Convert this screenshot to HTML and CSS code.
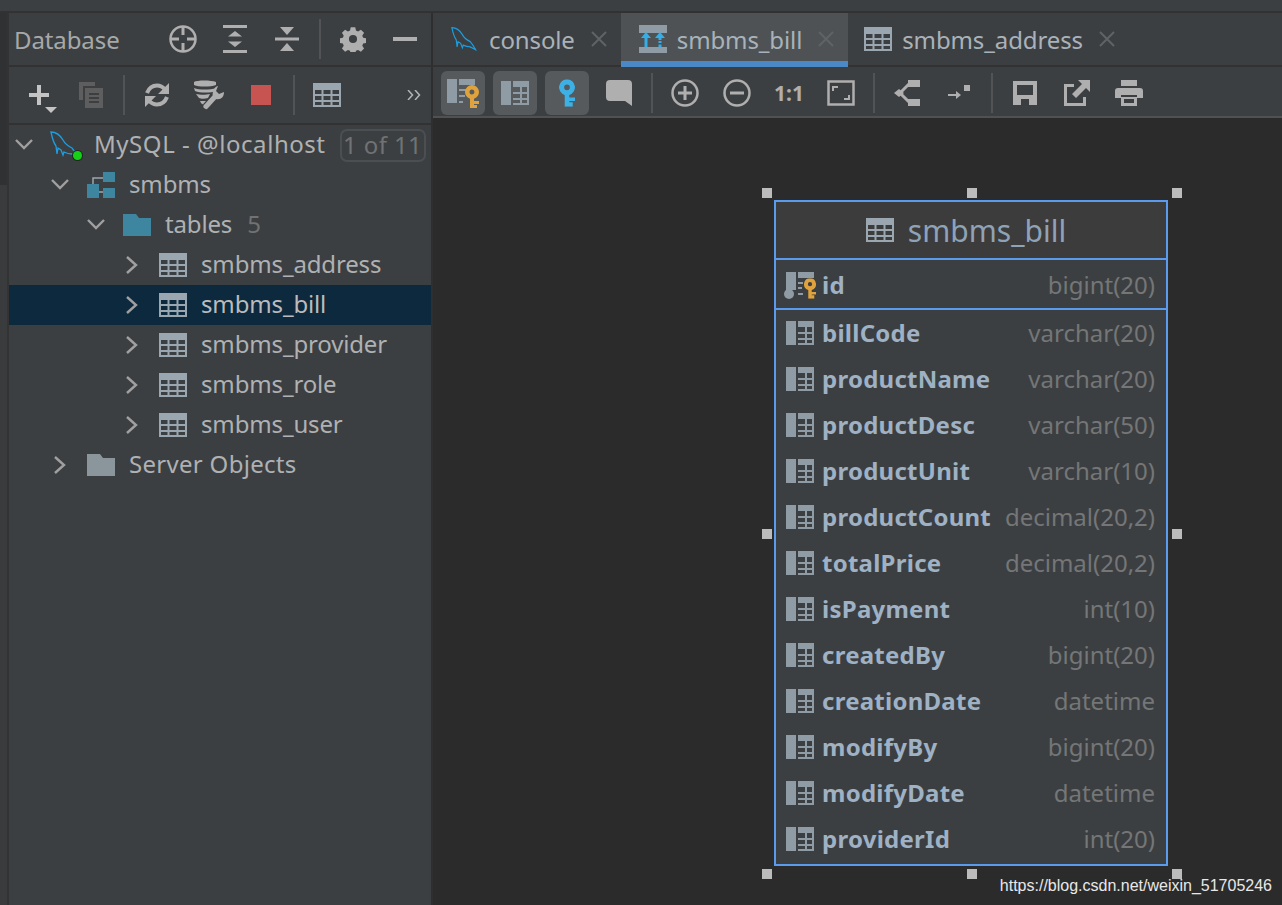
FILE: index.html
```html
<!DOCTYPE html>
<html lang="en">
<head>
  <meta charset="UTF-8" />
  <title>smbms_bill</title>
  <link rel="stylesheet" href="styles.css">
</head>
<body>

<svg class="defs" aria-hidden="true">
  <symbol id="i-table" viewBox="0 0 28 24">
    <path fill="none" stroke="currentColor" stroke-width="2" d="M1 1h26v22H1zM1 12h26M1 18h26M9.500 7v16M18.500 7v16"/>
    <rect width="28" height="7" fill="currentColor"/>
  </symbol>
  <symbol id="i-dolphin" viewBox="0 0 32 28">
    <path fill="none" stroke="currentColor" stroke-width="1.300" d="M1 1c5 0 9 3 12 8 2 4 5 6 9 8l3 4 3 5-6-3c-3 0-6-1-8-2l-1 3-2-5-3-2-1 6-1-8C3 11 2 6 1 1z"/>
  </symbol>
  <symbol id="i-column" viewBox="0 0 28 24">
    <rect width="10" height="24" fill="currentColor"/>
    <rect x="12" width="16" height="6" fill="currentColor"/>
    <path fill="none" stroke="currentColor" stroke-width="2" d="M27 6v17H12M12 12h15M12 18h15M20 6v17"/>
  </symbol>
  <symbol id="i-key" viewBox="0 0 14 24">
    <path fill="currentColor" fill-rule="evenodd" d="M7 0a7 7 0 0 1 2 13.700V16h5v3H9v1h3v4H5V13.700A7 7 0 0 1 7 0zm0 4.500a2.500 2.500 0 1 0 0 5 2.500 2.500 0 0 0 0-5z"/>
  </symbol>
</svg>

<div class="topbar"></div>

<div class="main">
  <div class="strip"></div>

  <aside class="sidebar">
    <div class="panel-head">
      <span class="panel-title">Database</span>
      <span class="spacer"></span>
      <span class="btn">
        <svg width="28" height="28" viewBox="0 0 28 28" class="ic"><circle cx="14" cy="14" r="12.500" fill="none" stroke="currentColor" stroke-width="2.500"/><path fill="currentColor" d="M12.500 1h3v9h-3zM12.500 18h3v9h-3zM1 12.500h9v3H1zM18 12.500h9v3h-9z"/></svg>
      </span>
      <span class="btn">
        <svg width="24" height="28" viewBox="0 0 24 28" class="ic"><path fill="currentColor" d="M0 0h24v3H0zM0 25h24v3H0zM12 6l7 5.500H5zM12 22l-7-5.500h14z"/></svg>
      </span>
      <span class="btn">
        <svg width="24" height="26" viewBox="0 0 24 26" class="ic"><path fill="currentColor" d="M0 11.500h24v3H0zM12 9L5 1h14zM12 17l7 8H5z"/></svg>
      </span>
      <span class="sep"></span>
      <span class="btn">
        <svg width="26" height="26" viewBox="0 0 26 26" class="ic"><path fill="currentColor" fill-rule="evenodd" d="M10.500 0h5l.8 3.600 2.300 1 3.200-2 3.500 3.500-2 3.200 1 2.200 3.700.8v5l-3.700.8-1 2.300 2 3.200-3.500 3.500-3.200-2-2.300 1-.8 3.700h-5l-.8-3.700-2.300-1-3.200 2-3.500-3.500 2-3.200-1-2.300-3.700-.8v-5l3.700-.8 1-2.200-2-3.200 3.500-3.500 3.200 2 2.300-1zM13 8.500a4.500 4.500 0 1 0 0 9 4.500 4.500 0 0 0 0-9z" transform="translate(1.300 1.300) scale(.9)"/></svg>
      </span>
      <span class="btn">
        <svg width="24" height="4" viewBox="0 0 24 4" class="ic"><rect width="24" height="4" fill="currentColor"/></svg>
      </span>
    </div>

    <div class="panel-tools">
      <span class="btn">
        <svg width="40" height="36" viewBox="0 0 40 36"><path fill="#c4c4c4" d="M18 8h4v8h8v4h-8v8h-4v-8h-8v-4h8z"/><path fill="#c4c4c4" d="M26 30h12l-6 6z"/></svg>
      </span>
      <span class="btn">
        <svg width="24" height="26" viewBox="0 0 24 26" class="ic"><path fill="#5e5e5e" fill-rule="evenodd" d="M0 0h16v4H4v14H0zM6 6h18v20H6zM10 11v2h10v-2zM10 15v2h10v-2zM10 19v2h10v-2z"/></svg>
      </span>
      <span class="sep"></span>
      <span class="btn">
        <svg width="26" height="26" viewBox="0 0 26 26" class="ic"><path fill="none" stroke="currentColor" stroke-width="4" d="M3 11C5 6 9 3.500 13 3.500c3 0 5.500 1 8 4M23 15c-2 5-6 7.500-10 7.500-3 0-5.500-1-8-4"/><path fill="currentColor" d="M25 1v11H14zM1 25V14h11z"/></svg>
      </span>
      <span class="btn">
        <svg width="32" height="30" viewBox="0 0 32 30" class="ic">
          <path fill="currentColor" d="M1 2c3-2 17-2 22 0v3C17 7 6 7 1 5zM1 8c5 2 16 2 22 0v3c-5 2-16 2-21 0zM3 14c4 1 10 1 14 0l-2 4c-3 1-7 1-9 0zM7 21h7l-2 3c-2 1-3 0-4-1z"/>
          <path fill="none" stroke="#3c3f41" stroke-width="8" d="M13 27l10-11"/>
          <path fill="none" stroke="currentColor" stroke-width="5" stroke-linecap="round" d="M13 26.500l10-11"/>
          <path fill="currentColor" d="M25 6l-2 5 3 3 5-2c0 5-3 8-8 7-3-1-4-4-3-7 1-4 3-6 5-6z"/>
        </svg>
      </span>
      <span class="btn">
        <svg width="20" height="20" class="ic"><rect width="20" height="20" fill="#c75450"/></svg>
      </span>
      <span class="sep"></span>
      <span class="btn">
        <svg width="28" height="24" class="ic-table"><use href="#i-table"/></svg>
      </span>
      <span class="more">
        <svg width="14" height="10" viewBox="0 0 14 10"><path fill="none" stroke="#b4b4b4" stroke-width="1.500" d="M1 0l4.500 5L1 10M8 0l4.500 5L8 10"/></svg>
      </span>
    </div>

    <div class="tree">
      <div class="row row-root">
        <svg class="chev" width="28" height="14" viewBox="0 0 28 14"><path d="M6 2l8 8 8-8"/></svg>
        <span class="db-icon">
          <svg width="32" height="28" class="dolphin"><use href="#i-dolphin"/></svg>
          <span class="status-dot"></span>
        </span>
        <span class="label label-root">MySQL - @localhost</span>
        <span class="badge">1 of 11</span>
      </div>
      <div class="row lvl1">
        <svg class="chev" width="28" height="14" viewBox="0 0 28 14"><path d="M6 2l8 8 8-8"/></svg>
        <svg width="28" height="26" viewBox="0 0 28 26" class="row-icon">
          <path fill="#3e86a0" d="M0 12h12v14H0zM16 0h12v10H16zM16 16h12v10H16z"/>
          <path fill="none" stroke="#9aa7b0" stroke-width="1.500" d="M6 12V6h10M12 20h4"/>
        </svg>
        <span class="label">smbms</span>
      </div>
      <div class="row lvl2">
        <svg class="chev" width="28" height="14" viewBox="0 0 28 14"><path d="M6 2l8 8 8-8"/></svg>
        <svg width="28" height="22" viewBox="0 0 28 22" class="row-icon"><path fill="#3e86a0" d="M0 0h13l3 4h12v18H0z"/></svg>
        <span class="label">tables</span>
        <span class="label count">5</span>
      </div>
      <div class="row lvl3">
        <svg class="chev" width="28" height="18" viewBox="0 0 28 18"><path d="M9 1l9 8-9 8"/></svg>
        <svg width="28" height="24" class="row-icon ic-table"><use href="#i-table"/></svg>
        <span class="label">smbms_address</span>
      </div>
      <div class="row lvl3 selected">
        <svg class="chev" width="28" height="18" viewBox="0 0 28 18"><path d="M9 1l9 8-9 8"/></svg>
        <svg width="28" height="24" class="row-icon ic-table"><use href="#i-table"/></svg>
        <span class="label">smbms_bill</span>
      </div>
      <div class="row lvl3">
        <svg class="chev" width="28" height="18" viewBox="0 0 28 18"><path d="M9 1l9 8-9 8"/></svg>
        <svg width="28" height="24" class="row-icon ic-table"><use href="#i-table"/></svg>
        <span class="label">smbms_provider</span>
      </div>
      <div class="row lvl3">
        <svg class="chev" width="28" height="18" viewBox="0 0 28 18"><path d="M9 1l9 8-9 8"/></svg>
        <svg width="28" height="24" class="row-icon ic-table"><use href="#i-table"/></svg>
        <span class="label">smbms_role</span>
      </div>
      <div class="row lvl3">
        <svg class="chev" width="28" height="18" viewBox="0 0 28 18"><path d="M9 1l9 8-9 8"/></svg>
        <svg width="28" height="24" class="row-icon ic-table"><use href="#i-table"/></svg>
        <span class="label">smbms_user</span>
      </div>
      <div class="row lvl1">
        <svg class="chev" width="28" height="18" viewBox="0 0 28 18"><path d="M9 1l9 8-9 8"/></svg>
        <svg width="28" height="22" viewBox="0 0 28 22" class="row-icon"><path fill="#8a959c" d="M0 0h13l3 4h12v18H0z"/></svg>
        <span class="label label-wide">Server Objects</span>
      </div>
    </div>
  </aside>

  <section class="editor">
    <div class="tabs">
      <div class="tab">
        <svg width="28" height="28" class="dolphin"><use href="#i-dolphin"/></svg>
        <span class="tab-name">console</span>
        <svg class="tab-x" width="16" height="16" viewBox="0 0 16 16"><path d="M1 1l14 14M15 1L1 15"/></svg>
      </div>
      <div class="tab active">
        <svg width="28" height="28" viewBox="0 0 28 28">
          <path fill="#8f9ca5" d="M0 0h28v8H0zM0 22h28v6H0z"/>
          <path fill="#35aee8" d="M7 7l5 6H8.500v9h-3v-9H2zM21 7l5 6h-3.500v2h-3v-2H16zM19.500 16h3v2h-3zM19.500 19.500h3V22h-3z"/>
        </svg>
        <span class="tab-name">smbms_bill</span>
        <svg class="tab-x" width="16" height="16" viewBox="0 0 16 16"><path d="M1 1l14 14M15 1L1 15"/></svg>
      </div>
      <div class="tab">
        <svg width="28" height="24" class="ic-table"><use href="#i-table"/></svg>
        <span class="tab-name">smbms_address</span>
        <svg class="tab-x" width="16" height="16" viewBox="0 0 16 16"><path d="M1 1l14 14M15 1L1 15"/></svg>
      </div>
    </div>

    <div class="diagram-tools">
      <span class="btn on">
        <svg width="32" height="30" viewBox="0 0 32 30">
          <rect y="1" width="10" height="24" fill="#8f9ca5"/>
          <rect x="12" y="1" width="16" height="6" fill="#8f9ca5"/>
          <path fill="none" stroke="#8f9ca5" stroke-width="2" d="M12 12h8M12 18h6M12 24h4"/>
          <svg x="18" y="7" width="14" height="24" viewBox="0 0 14 24"><use href="#i-key" color="#e0a23c"/></svg>
        </svg>
      </span>
      <span class="btn on">
        <svg width="28" height="24" class="col-grey"><use href="#i-column"/></svg>
      </span>
      <span class="btn on">
        <svg width="16" height="28" viewBox="0 0 14 24" class="key-blue"><use href="#i-key"/></svg>
      </span>
      <span class="btn">
        <svg width="26" height="26" viewBox="0 0 26 26" class="ic"><path fill="currentColor" d="M4 0h18a4 4 0 0 1 4 4v22l-7-5H4a4 4 0 0 1-4-4V4a4 4 0 0 1 4-4z"/></svg>
      </span>
      <span class="sep"></span>
      <span class="btn">
        <svg width="28" height="28" viewBox="0 0 28 28" class="ic"><circle cx="14" cy="14" r="12.500" fill="none" stroke="currentColor" stroke-width="2.500"/><path fill="currentColor" d="M12.500 7h3v5.500H21v3h-5.500V21h-3v-5.500H7v-3h5.500z"/></svg>
      </span>
      <span class="btn">
        <svg width="28" height="28" viewBox="0 0 28 28" class="ic"><circle cx="14" cy="14" r="12.500" fill="none" stroke="currentColor" stroke-width="2.500"/><path fill="currentColor" d="M7 12.500h14v3H7z"/></svg>
      </span>
      <span class="btn one-one">1:1</span>
      <span class="btn">
        <svg width="28" height="26" viewBox="0 0 28 26" class="ic"><path fill="none" stroke="currentColor" stroke-width="2.500" d="M1.500 1.500h25v23h-25z"/><path fill="none" stroke="currentColor" stroke-width="2" d="M6 11V7h5M22 15v4h-5"/></svg>
      </span>
      <span class="sep"></span>
      <span class="btn">
        <svg width="26" height="26" viewBox="0 0 26 26" class="ic"><path fill="currentColor" d="M14 0h12v7H14zM14 19h12v7H14zM0 13l5-4 5 4-5 4z"/><path fill="none" stroke="currentColor" stroke-width="3" d="M15 4l-9 9 9 9"/></svg>
      </span>
      <span class="btn">
        <svg width="22" height="16" viewBox="0 0 22 16" class="ic"><path fill="currentColor" d="M16 0h6v6h-6zM0 9h8V6l5 4-5 4v-3H0z"/></svg>
      </span>
      <span class="sep"></span>
      <span class="btn">
        <svg width="24" height="24" viewBox="0 0 24 24" class="ic"><path fill="currentColor" fill-rule="evenodd" d="M0 0h24v24H0zM4 4v10h16V4zM8 18v6h8v-6z"/></svg>
      </span>
      <span class="btn">
        <svg width="26" height="26" viewBox="0 0 26 26" class="ic"><path fill="currentColor" d="M0 4h10v3H3v16h16v-6h3v9H0z"/><path fill="currentColor" d="M14 0h12v12l-4-4-10 10-4-4L18 4z"/></svg>
      </span>
      <span class="btn">
        <svg width="28" height="26" viewBox="0 0 28 26" class="ic"><path fill="currentColor" fill-rule="evenodd" d="M6 0h16v6H6zM3 8h22a3 3 0 0 1 3 3v7h-6v-3H6v3H0v-7a3 3 0 0 1 3-3zM6 17h16v9H6zM9 19v4h10v-4z"/></svg>
      </span>
    </div>

    <div class="canvas">
      <div class="selection">
        <span class="handle h-tl"></span>
        <span class="handle h-tm"></span>
        <span class="handle h-tr"></span>
        <span class="handle h-ml"></span>
        <span class="handle h-mr"></span>
        <span class="handle h-bl"></span>
        <span class="handle h-bm"></span>
        <span class="handle h-br"></span>

        <div class="entity">
          <div class="entity-title">
            <svg width="28" height="24" class="ic-table"><use href="#i-table"/></svg>
            <span>smbms_bill</span>
          </div>
          <div class="field field-pk">
            <svg width="32" height="30" viewBox="0 0 32 30" class="field-icon">
              <rect x="2" y="3" width="10" height="18" fill="#8f9ca5"/>
              <circle cx="5" cy="25" r="5" fill="#8f9ca5"/>
              <rect x="14" y="3" width="16" height="6" fill="#8f9ca5"/>
              <path fill="none" stroke="#8f9ca5" stroke-width="2" d="M14 14h5M14 19h4M14 25h5"/>
              <svg x="20" y="9" width="12" height="21" viewBox="0 0 14 24"><use href="#i-key" color="#e0a23c"/></svg>
            </svg>
            <span class="field-name">id</span>
            <span class="field-type">bigint(20)</span>
          </div>
          <div class="fields">
            <div class="field"><svg width="28" height="24" class="field-icon"><use href="#i-column"/></svg><span class="field-name">billCode</span><span class="field-type">varchar(20)</span></div>
            <div class="field"><svg width="28" height="24" class="field-icon"><use href="#i-column"/></svg><span class="field-name">productName</span><span class="field-type">varchar(20)</span></div>
            <div class="field"><svg width="28" height="24" class="field-icon"><use href="#i-column"/></svg><span class="field-name">productDesc</span><span class="field-type">varchar(50)</span></div>
            <div class="field"><svg width="28" height="24" class="field-icon"><use href="#i-column"/></svg><span class="field-name">productUnit</span><span class="field-type">varchar(10)</span></div>
            <div class="field"><svg width="28" height="24" class="field-icon"><use href="#i-column"/></svg><span class="field-name">productCount</span><span class="field-type">decimal(20,2)</span></div>
            <div class="field"><svg width="28" height="24" class="field-icon"><use href="#i-column"/></svg><span class="field-name">totalPrice</span><span class="field-type">decimal(20,2)</span></div>
            <div class="field"><svg width="28" height="24" class="field-icon"><use href="#i-column"/></svg><span class="field-name">isPayment</span><span class="field-type">int(10)</span></div>
            <div class="field"><svg width="28" height="24" class="field-icon"><use href="#i-column"/></svg><span class="field-name">createdBy</span><span class="field-type">bigint(20)</span></div>
            <div class="field"><svg width="28" height="24" class="field-icon"><use href="#i-column"/></svg><span class="field-name">creationDate</span><span class="field-type">datetime</span></div>
            <div class="field"><svg width="28" height="24" class="field-icon"><use href="#i-column"/></svg><span class="field-name">modifyBy</span><span class="field-type">bigint(20)</span></div>
            <div class="field"><svg width="28" height="24" class="field-icon"><use href="#i-column"/></svg><span class="field-name">modifyDate</span><span class="field-type">datetime</span></div>
            <div class="field"><svg width="28" height="24" class="field-icon"><use href="#i-column"/></svg><span class="field-name">providerId</span><span class="field-type">int(20)</span></div>
          </div>
        </div>
      </div>
      <div class="watermark">https://blog.csdn.net/weixin_51705246</div>
    </div>
  </section>
</div>

</body>
</html>
```

FILE: styles.css
```css
* {
  margin: 0;
  padding: 0;
  box-sizing: border-box;
}

body, html {
  height: 100%;
  overflow: hidden;
  background: #3c3f41;
  font-family: "Noto Sans", "Open Sans", sans-serif;
  font-size: 24px;
  color: #afb1b3;
}

.defs {
  position: absolute;
  width: 0;
  height: 0;
}

.topbar {
  height: 13px;
  background: #3c3f41;
  border-bottom: 2px solid #323232;
}

.main {
  display: flex;
  height: 892px;
}

.strip {
  width: 9px;
  background: linear-gradient(#2f3132 172px, #393b3d 172px);
  border-right: 2px solid #333;
}

/* left panel */
.sidebar {
  width: 424px;
  border-right: 2px solid #2f2f2f;
  display: flex;
  flex-direction: column;
}

.panel-head {
  height: 54px;
  display: flex;
  align-items: center;
  padding-left: 5px;
  border-bottom: 2px solid #323232;
}

.panel-title {
  color: #a8a8a8;
  letter-spacing: -0.1px;
}

.spacer {
  flex: 1;
}

.btn {
  width: 52px;
  height: 44px;
  flex: none;
  display: flex;
  align-items: center;
  justify-content: center;
  color: #afafaf;
}

.sep {
  width: 14px;
  flex: none;
  display: flex;
  justify-content: center;
}

.sep::before {
  content: "";
  width: 2px;
  height: 40px;
  background: #515354;
}

.panel-tools {
  height: 58px;
  display: flex;
  align-items: center;
  padding-left: 4px;
  border-bottom: 2px solid #323232;
}

.more {
  margin-left: auto;
  margin-right: 10px;
  display: flex;
}

.ic-table {
  color: #9aa7b0;
}

.dolphin {
  color: #1d9ee0;
}

/* tree */
.tree {
  display: flex;
  flex-direction: column;
}

.row {
  height: 40px;
  flex: none;
  display: flex;
  align-items: center;
}

.row.selected {
  background: #0d293e;
  color: #bbbbbb;
}

.label {
  padding-bottom: 4px;
  letter-spacing: -0.15px;
}

.label-root {
  letter-spacing: 0.55px;
}

.label-wide {
  letter-spacing: 0.3px;
}

.chev {
  flex: none;
  fill: none;
  stroke: #a0a0a0;
  stroke-width: 2.400;
}

.row-root {
  padding-left: 1px;
}

.db-icon {
  position: relative;
  width: 32px;
  height: 28px;
  margin-left: 12px;
  margin-right: 12px;
  display: flex;
}

.status-dot {
  position: absolute;
  left: 23px;
  top: 20px;
  width: 9px;
  height: 9px;
  border-radius: 50%;
  background: #16d216;
  box-shadow: 0 0 0 1px #1d2b1d;
}

.badge {
  margin-left: 14px;
  height: 33px;
  width: 86px;
  padding-bottom: 2px;
  border: 2px solid #4b4f51;
  border-radius: 7px;
  color: #707273;
  letter-spacing: 0.4px;
  display: flex;
  align-items: center;
  justify-content: center;
}

.row-icon {
  flex: none;
  margin-left: 13px;
  margin-right: 14px;
}

.lvl1 {
  padding-left: 37px;
}

.lvl2 {
  padding-left: 73px;
}

.lvl3 {
  padding-left: 109px;
}

.count {
  margin-left: 15px;
  color: #707273;
}

/* editor side */
.editor {
  flex: 1;
  display: flex;
  flex-direction: column;
  min-width: 0;
}

.tabs {
  height: 54px;
  display: flex;
  border-bottom: 2px solid #323232;
}

.tab {
  display: flex;
  align-items: center;
  padding: 0 14px 0 18px;
  gap: 10px;
}

.tab.active {
  background: #4e5254;
  border-bottom: 6px solid #4a88c7;
  margin-bottom: -2px;
  padding-top: 4px;
}

.tab.active + .tab {
  padding-left: 16px;
}

.tab-name {
  color: #a9b2ba;
  letter-spacing: -0.12px;
}

.tab-x {
  margin-left: 6px;
  fill: none;
  stroke: #5f6365;
  stroke-width: 2;
}

.diagram-tools {
  height: 51px;
  display: flex;
  align-items: center;
  padding: 3px 0 0 4px;
  border-bottom: 2px solid #515151;
}

.btn.on::before {
  content: "";
  position: absolute;
  width: 44px;
  height: 44px;
  background: #565a5c;
  border-radius: 6px;
}

.btn.on > svg {
  position: relative;
}

.col-grey {
  color: #8f9ca5;
}

.key-blue {
  color: #3db1e6;
}

.one-one {
  font-weight: 700;
  font-size: 21px;
}

/* diagram */
.canvas {
  flex: 1;
  position: relative;
  background: #2b2b2b;
  overflow: hidden;
}

.selection {
  position: absolute;
  left: 341px;
  top: 82px;
  width: 394px;
}

.handle {
  position: absolute;
  width: 10px;
  height: 10px;
  background: #bcbcbc;
}

.h-tl { left: -12px; top: -12px; }
.h-tm { left: 193px; top: -12px; }
.h-tr { right: -14px; top: -12px; }
.h-ml { left: -12px; top: 329px; }
.h-mr { right: -14px; top: 329px; }
.h-bl { left: -12px; top: 669px; }
.h-bm { left: 193px; top: 669px; }
.h-br { right: -14px; top: 669px; }

.entity {
  height: 666px;
  border: 2px solid #5b9bee;
  background: #3c3f41;
}

.entity-title {
  height: 58px;
  display: flex;
  align-items: center;
  justify-content: center;
  gap: 14px;
  padding-right: 10px;
  background: #3c3c3c;
  border-bottom: 2px solid #5b9bee;
  font-size: 30px;
  color: #8fa3b8;
}

.field {
  height: 46px;
  display: flex;
  align-items: center;
  padding: 0 11px 0 10px;
}

.fields .field-name, .fields .field-type {
  padding-bottom: 2px;
}

.field-pk {
  height: 50px;
  border-bottom: 2px solid #5b9bee;
}

.field-icon {
  flex: none;
  margin-right: 8px;
  color: #8f9ca5;
}

.field-pk .field-icon {
  margin-left: -2px;
  margin-right: 6px;
}

.field-name {
  font-weight: 700;
  color: #9fb1c4;
  letter-spacing: 0.25px;
  white-space: nowrap;
}

.field-type {
  margin-left: auto;
  color: #747677;
  white-space: nowrap;
}

.watermark {
  position: absolute;
  right: 10px;
  bottom: 10px;
  font-family: "Liberation Sans", sans-serif;
  font-size: 16px;
  color: #e8e8e8;
}
```
